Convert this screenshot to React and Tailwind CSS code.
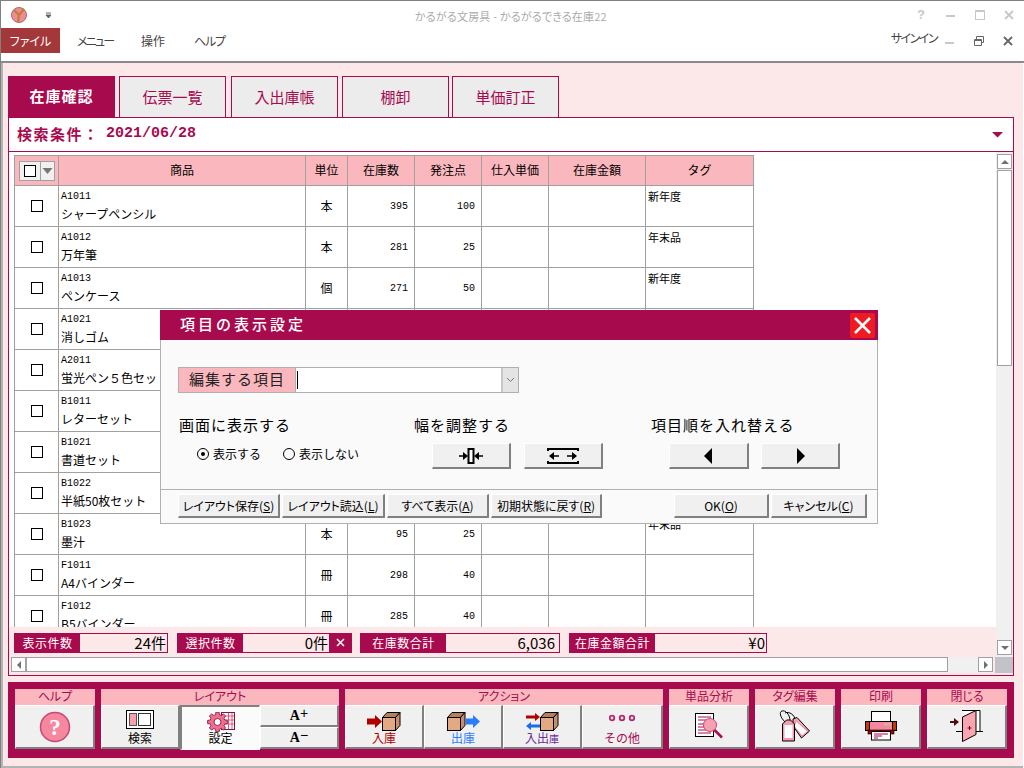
import React from "react";

const rows = [
  ["A1011", "シャープペンシル", "本", "395", "100", "新年度"],
  ["A1012", "万年筆", "本", "281", "25", "年末品"],
  ["A1013", "ペンケース", "個", "271", "50", "新年度"],
  ["A1021", "消しゴム", "個", "310", "50", "新年度"],
  ["A2011", "蛍光ペン５色セット", "個", "248", "30", ""],
  ["B1011", "レターセット", "組", "180", "20", ""],
  ["B1021", "書道セット", "組", "120", "20", ""],
  ["B1022", "半紙50枚セット", "組", "210", "25", ""],
  ["B1023", "墨汁", "本", "95", "25", "年末品"],
  ["F1011", "A4バインダー", "冊", "298", "40", ""],
  ["F1012", "B5バインダー", "冊", "285", "40", ""],
];

const raised = "bg-[#f0f0f0] border-t border-l border-t-white border-l-white border-r-2 border-b-2 border-r-[#808080] border-b-[#808080]";

function gearPath(cx, cy, ro, ri, n) {
  let d = "";
  const step = (Math.PI * 2) / n;
  for (let i = 0; i < n; i++) {
    const a = i * step - Math.PI / 2;
    const pts = [
      [ri, a - step * 0.34],
      [ro, a - step * 0.2],
      [ro, a + step * 0.2],
      [ri, a + step * 0.34],
    ];
    pts.forEach(([r, t], j) => {
      d += `${i === 0 && j === 0 ? "M" : "L"}${(cx + r * Math.cos(t)).toFixed(2)} ${(cy + r * Math.sin(t)).toFixed(2)}`;
    });
  }
  return d + "Z";
}

function Tab({ children, active }) {
  return active ? (
    <div className="w-[107px] h-[41px] bg-[#a80a4e] text-white text-[15px] font-bold tracking-[1px] flex items-center justify-center">{children}</div>
  ) : (
    <div className="w-[107px] h-[41px] bg-[#ececec] border border-b-0 border-[#a80a4e] text-[#a80a4e] text-[15px] flex items-center justify-center">{children}</div>
  );
}

function Box({ cls = "" }) {
  return <span className={`block w-[12px] h-[12px] border border-black bg-white ${cls}`} />;
}

function Cube() {
  return (
    <svg width="19" height="19" viewBox="0 0 19 19" className="block">
      <path d="M.5 5.5 5 .5h13l-4.5 5z" fill="#b5805f" stroke="#000" />
      <path d="M13.5 5.5 18 .5v13l-4.500 5z" fill="#c98f6c" stroke="#000" />
      <rect x=".5" y="5.500" width="13" height="13" fill="#e2a982" stroke="#000" />
    </svg>
  );
}

function Stat({ label, value, labelW, w, x, pr = 1 }) {
  return (
    <div className="flex h-[20px] border border-[#a80a4e]" style={{ width: w }}>
      <div className="bg-[#a80a4e] text-white text-[12px] flex items-center justify-center tracking-[.5px]" style={{ width: labelW }}>{label}</div>
      <div className="flex-1 flex items-center justify-end text-[15px] leading-none text-black" style={{ paddingRight: pr }}>{value}</div>
      {x}
    </div>
  );
}

function Group({ title, w, children }) {
  return (
    <div className="flex flex-col shrink-0" style={{ width: w }}>
      <div className="h-[16px] bg-[#fbb7be] text-[#a80a4e] text-[12px] leading-[14px] text-center [font-feature-settings:'palt']">{title}</div>
      <div className="flex h-[44px]">{children}</div>
    </div>
  );
}

function TB({ w, icon, label, color = "text-black", size = "text-[12px]", pt = 5 }) {
  return (
    <div className={`${raised} h-full flex flex-col items-center justify-start ${color} ${size}`} style={{ width: w }}>
      <div className="h-[25px] flex items-start justify-center" style={{ paddingTop: pt }}>{icon}</div>
      {label && <div className="leading-[13px]">{label}</div>}
    </div>
  );
}

function ScrollBtn({ dir, cls = "" }) {
  const p = { up: "M2 8 6 4l4 4z", down: "M2 4h8L6 8z", left: "M8 2v8L4 6z", right: "M4 2v8l4-4z" }[dir];
  return (
    <div className={`w-[15px] h-[15px] bg-white border border-[#a0a0a0] flex items-center justify-center shrink-0 ${cls}`}>
      <svg width="12" height="12" viewBox="0 0 12 12"><path d={p} fill="#707070" /></svg>
    </div>
  );
}

function FootBtn({ w, children, u }) {
  return (
    <div className={`${raised} h-[24px] flex items-center justify-center text-[12px] text-black whitespace-nowrap [font-feature-settings:'palt']`} style={{ width: w }}>
      <span>{children}(<span className="underline">{u}</span>)</span>
    </div>
  );
}

export default function App() {
  return (
    <div className="w-[1024px] h-[768px] overflow-hidden relative bg-white flex flex-col border-t border-l border-[#808080] font-['Noto_Sans_CJK_JP','Liberation_Sans',sans-serif]">
      {/* title bar */}
      <div className="h-[27px] flex items-center relative shrink-0">
        <svg width="18" height="18" viewBox="0 0 18 18" className="ml-[9px]">
          <circle cx="9" cy="9" r="7.500" fill="#f08a98" stroke="#a86a6a" />
          <path d="M4 4l5 5 5-6M9 9l-1 7" stroke="#c08030" strokeWidth="2.200" fill="none" />
        </svg>
        <svg width="8" height="8" viewBox="0 0 8 8" className="ml-[17px]">
          <path d="M1 2h5M1 4l2.500 3L6 4z" stroke="#666" fill="#666" />
        </svg>
        <div className="absolute left-[414px] top-[6px] text-[11px] leading-[18px] tracking-[.2px] text-[#ababab] whitespace-nowrap [font-feature-settings:'palt']">かるがる文房具 - かるがるできる在庫22</div>
        <div className="ml-auto flex items-center pr-[10px] text-[#c8c8c8]">
          <span className="w-[30px] text-center text-[13px] font-bold font-['Liberation_Sans']">?</span>
          <span className="w-[9px] h-[2px] bg-[#c8c8c8] ml-[10px] mt-[3px]" />
          <span className="w-[10px] h-[10px] border border-[#c8c8c8] border-t-2 ml-[20px]" />
          <svg width="10" height="10" viewBox="0 0 10 10" className="ml-[19px]"><path d="M1 1l8 8M9 1 1 9" stroke="#c8c8c8" strokeWidth="1.800" /></svg>
        </div>
      </div>
      {/* menu */}
      <div className="h-[35px] shrink-0 flex items-start text-[12px] text-[#444] relative border-b-2 border-[#8a8a8a] [font-feature-settings:'palt']">
        <div className="w-[59px] h-[25px] bg-[#a4373a] text-white flex items-center justify-center">ファイル</div>
        <span className="ml-[17px] w-[35px] leading-[25px] tracking-[-1.800px] whitespace-nowrap">メニュー</span>
        <span className="ml-[29px] leading-[25px]">操作</span>
        <span className="ml-[29px] leading-[25px] tracking-[-1.200px]">ヘルプ</span>
        <span className="ml-auto leading-[20px] mr-[87px] text-[#444] tracking-[-1.500px] whitespace-nowrap">サインイン</span>
        <div className="absolute left-[944px] top-[8px] flex items-center">
          <span className="w-[9px] h-[2px] bg-[#c8c8c8] mt-[3px]" />
          <svg width="10" height="10" viewBox="0 0 10 10" className="ml-[20px]"><path d="M.5 3.500h7v6h-7zM2.500 3V.5h7v6H8M.5 4.500h7" stroke="#666" fill="none" /></svg>
          <svg width="10" height="10" viewBox="0 0 10 10" className="ml-[19px]"><path d="M1 1l8 8M9 1 1 9" stroke="#666" strokeWidth="1.800" /></svg>
        </div>
      </div>
      {/* main */}
      <div className="flex-1 min-h-0 bg-[#fde8e9] border-l-2 border-b-2 border-[#b4b4b4] mr-[1px] pl-[5px] pt-[13px] flex flex-col">
        <div className="flex h-[41px] shrink-0">
          <Tab active>在庫確認</Tab>
          <div className="w-[4px]" />
          <Tab>伝票一覧</Tab>
          <div className="w-[5px]" />
          <Tab>入出庫帳</Tab>
          <div className="w-[4px]" />
          <Tab>棚卸</Tab>
          <div className="w-[3px]" />
          <div className="w-[108px]"><Tab>単価訂正</Tab></div>
        </div>
        {/* panel */}
        <div className="w-[1006px] h-[559px] shrink-0 border border-[#a80a4e] flex flex-col">
          <div className="h-[34px] shrink-0 bg-white border-b border-[#a80a4e] flex items-center pl-[8px] pr-[10px] text-[#a80a4e]">
            <span className="text-[15px] font-bold tracking-[1.500px] whitespace-nowrap w-[89px]">検索条件：</span>
            <span className="font-['Liberation_Mono'] font-bold text-[15px]">2021/06/28</span>
            <svg width="11" height="7" viewBox="0 0 11 7" className="ml-auto"><path d="M0 1h11L5.500 6.500z" fill="#a80a4e" /></svg>
          </div>
          <div className="flex h-[505px] shrink-0">
            <div className="w-[987px] flex flex-col">
              <div className="h-[475px] bg-white overflow-hidden pl-[5px] pt-[3px]">
                <table className="table-fixed border-collapse text-black" style={{ width: 739 }}>
                  <colgroup>
                    <col className="w-[44px]" /><col className="w-[247px]" /><col className="w-[42px]" /><col className="w-[67px]" /><col className="w-[67px]" /><col className="w-[67px]" /><col className="w-[97px]" /><col className="w-[108px]" />
                  </colgroup>
                  <thead>
                    <tr className="h-[30px] bg-[#fbb7be] text-[12px]">
                      <th className="border border-[#a0a0a0] font-normal p-0">
                        <div className="mx-auto w-[36px] h-[20px] bg-[#f0f0f0] border border-[#a0a0a0] flex items-center">
                          <span className="w-[21px] flex justify-center border-r border-[#a0a0a0] h-full items-center"><Box /></span>
                          <svg width="13" height="8" viewBox="0 0 13 8"><path d="M1.500 1h10l-5 6z" fill="#777" /></svg>
                        </div>
                      </th>
                      {["商品", "単位", "在庫数", "発注点", "仕入単価", "在庫金額", "タグ"].map((h) => (
                        <th key={h} className="border border-[#a0a0a0] font-normal p-0 pb-[2px] text-center">{h}</th>
                      ))}
                    </tr>
                  </thead>
                  <tbody>
                    {rows.map((r) => (
                      <tr key={r[0]} className="h-[41px]">
                        <td className="border border-[#a0a0a0] p-0"><Box cls="mx-auto" /></td>
                        <td className="border border-[#a0a0a0] p-0 pl-[2px] align-top">
                          <div className="font-['Liberation_Mono'] text-[10px] leading-[12px] mt-[5px]">{r[0]}</div>
                          <div className="text-[12px] leading-[18px] mt-[2px] whitespace-nowrap">{r[1]}</div>
                        </td>
                        <td className="border border-[#a0a0a0] p-0 text-center text-[12px]">{r[2]}</td>
                        <td className="border border-[#a0a0a0] p-0 pr-[6px] text-right font-['Liberation_Mono'] text-[10px]">{r[3]}</td>
                        <td className="border border-[#a0a0a0] p-0 pr-[6px] text-right font-['Liberation_Mono'] text-[10px]">{r[4]}</td>
                        <td className="border border-[#a0a0a0] p-0" />
                        <td className="border border-[#a0a0a0] p-0" />
                        <td className="border border-[#a0a0a0] p-0 pl-[2px] align-top text-[11px] leading-[20px]">{r[5]}</td>
                      </tr>
                    ))}
                  </tbody>
                </table>
              </div>
              <div className="h-[30px] flex items-center pl-[5px] pt-[1px]">
                <Stat label="表示件数" value="24件" w={154} labelW={65} />
                <div className="w-[9px]" />
                <Stat label="選択件数" value="0件" w={175} labelW={65} x={<div className="w-[22px] bg-[#a80a4e] text-white flex items-center justify-center"><svg width="9" height="9" viewBox="0 0 9 9"><path d="M1 1l7 7M8 1 1 8" stroke="#fff" strokeWidth="1.500" /></svg></div>} />
                <div className="w-[8px]" />
                <Stat label="在庫数合計" value="6,036" w={200} labelW={85} pr={4} />
                <div className="w-[9px]" />
                <Stat label="在庫金額合計" value="¥0" w={198} labelW={85} />
              </div>
            </div>
            <div className="flex-1 bg-[#f0f0f0] pl-[1px] pt-[2px] flex flex-col">
              <ScrollBtn dir="up" />
              <div className="w-[15px] h-[196px] bg-white border border-[#a0a0a0] mt-[1px]" />
              <ScrollBtn dir="down" cls="mt-auto mb-[2px]" />
            </div>
          </div>
          <div className="h-[16px] flex shrink-0 bg-[#fde8e9] pl-[2px]">
            <ScrollBtn dir="left" />
            <div className="w-[922px] h-[15px] bg-white border border-[#a0a0a0]" />
            <div className="w-[30px] h-[15px] bg-[#f0f0f0]" />
            <ScrollBtn dir="right" />
            <div className="flex-1 bg-[#c2c3c9] h-[16px] ml-[2px]" />
          </div>
        </div>
        {/* toolbar */}
        <div className="w-[1006px] h-[76px] shrink-0 mt-[6px] bg-[#a80a4e] pt-[7px] px-[7px] flex gap-[6px]">
          <Group title="ヘルプ" w={80}>
            <TB w={80} pt={5} icon={
              <svg width="32" height="32" viewBox="0 0 32 32">
                <circle cx="16" cy="16" r="14.500" fill="#f7879f" stroke="#c24a74" strokeWidth="1.500" />
                <text x="16" y="24" textAnchor="middle" fontSize="23" fontWeight="bold" fill="#fff" fontFamily="Liberation Serif">?</text>
              </svg>
            } />
          </Group>
          <Group title="レイアウト" w={238}>
            <TB w={79} label="検索" pt={4} icon={
              <svg width="28" height="19" viewBox="0 0 28 19"><rect x=".5" y=".5" width="27" height="18" fill="#fff" stroke="#000" /><rect x="3.500" y="3.500" width="7" height="12" fill="#f9a0ac" stroke="#555" /><rect x="12.500" y="3.500" width="12" height="12" fill="#fff" stroke="#333" /></svg>
            } />
            <div className="w-[80px] h-[45px] shrink-0 bg-[#fbfbfb] border-t-2 border-l-2 border-t-[#808080] border-l-[#808080] border-b border-r border-white flex flex-col items-center text-[12px] text-black z-10">
              <svg width="28" height="20" viewBox="0 0 28 20" className="mt-[5px]">
                <rect x="14.500" y=".5" width="13" height="17" fill="#fff" stroke="#7a1a40" />
                <path d="M18 4h9M18 8h9M18 12h9M21.500 1v16M25 1v16" stroke="#e0507a" />
                <path d={gearPath(10.5, 10, 10, 7.5, 8)} fill="#f26d8e" stroke="#8a2d4f" />
                <circle cx="10.500" cy="10" r="3.500" fill="#fff" stroke="#8a2d4f" />
              </svg>
              <span className="leading-[13px] -mt-[1px]">設定</span>
            </div>
            <div className="w-[79px] flex flex-col font-['Liberation_Serif'] font-bold text-[14px] text-black">
              <div className={`${raised} h-[23px] flex items-center justify-center leading-none`}>A<span className="text-[14px] font-normal font-['Liberation_Sans'] -mt-[6px]">+</span></div>
              <div className={`${raised} h-[22px] flex items-center justify-center leading-none`}>A<span className="text-[14px] font-normal font-['Liberation_Sans'] -mt-[6px]">−</span></div>
            </div>
          </Group>
          <Group title="アクション" w={318}>
            <TB w={79} color="text-[#b00000]" label="入庫" pt={6} icon={
              <div className="flex items-center">
                <svg width="15" height="13" viewBox="0 0 15 13"><path d="M0 3.500h8V0l7 6.500L8 13V9.500H0z" fill="#b00000" /></svg>
                <Cube />
              </div>
            } />
            <TB w={79} color="text-[#2a7cff]" label="出庫" pt={6} icon={
              <div className="flex items-center">
                <Cube />
                <svg width="14" height="13" viewBox="0 0 14 13"><path d="M0 3.500h7V0l7 6.500L7 13V9.500H0z" fill="#2a7cff" /></svg>
              </div>
            } />
            <TB w={79} color="text-[#6a2ca0]" label={<>入出<span className="text-[10px]">庫</span></>} pt={6} icon={
              <div className="flex items-center">
                <svg width="14" height="17" viewBox="0 0 14 17"><path d="M0 2.500h9V0l5 4-5 4V5.500H0z" fill="#b00000" /><path d="M14 11.500H5V9l-5 4 5 4v-2.500h9z" fill="#1a6cf0" /></svg>
                <Cube />
              </div>
            } />
            <TB w={81} color="text-[#a80a4e]" label="その他" pt={3} icon={
              <svg width="26" height="19" viewBox="0 0 26 19"><g fill="none" stroke="#b8246a" strokeWidth="1.800"><circle cx="3" cy="9" r="2.300" /><circle cx="13" cy="9" r="2.300" /><circle cx="23" cy="9" r="2.300" /></g></svg>
            } />
          </Group>
          <Group title="単品分析" w={80}>
            <TB w={80} pt={7} icon={
              <svg width="32" height="26" viewBox="0 0 32 26">
                <rect x="2.500" y=".5" width="18" height="23" fill="#fff" stroke="#000" />
                <path d="M5 4h13M5 7h13M5 11h8M5 14h8M5 17h13M5 20h13" stroke="#a80a4e" />
                <circle cx="17" cy="12" r="6.500" fill="#f7a0b2" stroke="#c24a74" />
                <path d="M21.500 17l7.500 7.500" stroke="#a80a4e" strokeWidth="2.500" />
              </svg>
            } />
          </Group>
          <Group title="タグ編集" w={80}>
            <TB w={80} pt={4} icon={
              <svg width="32" height="32" viewBox="0 0 32 32">
                <path d="M6 12C1 7 0 2 3 1c3-1 8 3 8 10M6 3c4-2 10 2 10 7" stroke="#000" fill="none" />
                <path d="M14 9l4-1.500 12.500 13.500-8 7L14 16z" fill="#f9a6b4" stroke="#000" />
                <path d="M17.500 11l11 10.500-5.500 4.500-8-10z" fill="#fff" stroke="#e06080" strokeWidth=".7" />
                <path d="M3.500 14l4-4h4l4 4v17h-12z" fill="#f79bb0" stroke="#000" />
                <rect x="5.500" y="15" width="8" height="13" fill="#fff" />
              </svg>
            } />
          </Group>
          <Group title="印刷" w={80}>
            <TB w={80} pt={5} icon={
              <svg width="32" height="30" viewBox="0 0 32 30">
                <rect x="6.500" y=".5" width="19" height="10" fill="#fff" stroke="#000" />
                <rect x=".5" y="10.500" width="31" height="9" fill="#c43a00" stroke="#000" />
                <rect x="4.500" y="10.500" width="23" height="9" fill="#f7879f" stroke="#000" />
                <rect x="19" y="12" width="7" height="2.500" fill="#c8b8a0" />
                <rect x="3" y="19" width="26" height="4" fill="#a00000" stroke="#000" strokeWidth=".6" />
                <rect x="6.500" y="20.500" width="19" height="8.500" fill="#fff" stroke="#000" />
                <path d="M9 23h14M9 25h8M9 27h4" stroke="#a80a4e" />
              </svg>
            } />
          </Group>
          <Group title="閉じる" w={80}>
            <TB w={80} pt={4} icon={
              <svg width="34" height="32" viewBox="0 0 34 32">
                <path d="M0 11h4V8l5 4-5 4v-3H0z" fill="#520a10" />
                <path d="M6 21.500h27" stroke="#000" />
                <path d="M12 .5h18v21h-4" fill="#fff" stroke="#000" />
                <path d="M12.500 7 26 .5v24L12.500 31.500z" fill="#f9a6b0" stroke="#000" />
                <path d="M17.500 18h4M19.500 16v4" stroke="#7a0030" />
              </svg>
            } />
          </Group>
        </div>
      </div>

      {/* dialog */}
      <div className="absolute left-[159px] top-[309px] w-[718px] h-[214px] bg-[#fafafa] border border-t-0 border-[#b0b0b0] flex flex-col text-black z-20">
        <div className="h-[30px] shrink-0 -mx-[1px] bg-[#a80a4e] flex items-center pl-[20px] pr-[3px] text-white">
          <span className="text-[15px] tracking-[3px] font-medium pb-[2px]">項目の表示設定</span>
          <div className="ml-auto w-[25px] h-[25px] bg-[#ed1c24] rounded-[2px] flex items-center justify-center">
            <svg width="19" height="19" viewBox="0 0 19 19"><path d="M2 2l15 15M17 2 2 17" stroke="#fff" strokeWidth="2.600" /></svg>
          </div>
        </div>
        <div className="flex mt-[27px] ml-[17px] h-[26px] w-[341px] border border-[#b0b0b0] bg-white">
          <div className="w-[117px] bg-[#fbb7be] border-r border-[#b0b0b0] text-[15px] tracking-[1px] flex items-center justify-center text-[#222] pb-[1px]">編集する項目</div>
          <div className="w-[1px] h-[18px] bg-black ml-[1px] mt-[3px]" />
          <div className="ml-auto w-[17px] bg-[#e4e4e4] border-l-2 border-[#c8c8c8] flex items-center justify-center">
            <svg width="9" height="6" viewBox="0 0 9 6"><path d="M1 1l3.500 3.500L8 1" stroke="#777" fill="none" /></svg>
          </div>
        </div>
        <div className="flex mt-[22px] h-[62px]">
          <div className="w-[253px] pl-[18px]">
            <div className="text-[15px] leading-[20px] tracking-[1px] whitespace-nowrap">画面に表示する</div>
            <div className="flex items-center mt-[10px] pl-[18px] text-[12px] leading-[18px]">
              <span className="w-[12px] h-[12px] rounded-full border border-black flex items-center justify-center mr-[4px]"><span className="w-[4px] h-[4px] rounded-full bg-black" /></span>
              表示する
              <span className="w-[12px] h-[12px] rounded-full border border-black ml-[22px] mr-[4px]" />
              表示しない
            </div>
          </div>
          <div className="w-[237px]">
            <div className="text-[15px] leading-[20px] tracking-[1px] whitespace-nowrap">幅を調整する</div>
            <div className="flex mt-[8px] ml-[18px] gap-[13px]">
              <div className={`${raised} w-[79px] h-[26px] flex items-center justify-center`}>
                <svg width="32" height="16" viewBox="0 0 32 16"><path d="M4 8h7M28 8h-7" stroke="#000" strokeWidth="1.500" /><path d="M8 4l5 4-5 4zM24 4l-5 4 5 4z" /><rect x="13.500" y="1" width="5" height="14" fill="#fff" stroke="#000" strokeWidth="2" /></svg>
              </div>
              <div className={`${raised} w-[79px] h-[26px] flex items-center justify-center`}>
                <svg width="32" height="16" viewBox="0 0 32 16"><path d="M1 1h30M1 15h30M1 0v3M31 0v3M1 13v3M31 13v3" stroke="#000" strokeWidth="2" /><path d="M3 8h9M20 8h9" stroke="#000" strokeWidth="1.500" /><path d="M7 4 2 8l5 4zM25 4l5 4-5 4z" /></svg>
              </div>
            </div>
          </div>
          <div className="flex-1">
            <div className="text-[15px] leading-[20px] tracking-[1px] whitespace-nowrap">項目順を入れ替える</div>
            <div className="flex mt-[8px] ml-[18px] gap-[12px]">
              <div className={`${raised} w-[80px] h-[26px] flex items-center justify-center`}>
                <svg width="9" height="16" viewBox="0 0 9 16"><path d="M8 0v16L0 8z" /></svg>
              </div>
              <div className={`${raised} w-[79px] h-[26px] flex items-center justify-center`}>
                <svg width="9" height="16" viewBox="0 0 9 16"><path d="M1 0v16l8-8z" /></svg>
              </div>
            </div>
          </div>
        </div>
        <div className="mt-auto h-[34px] border-t border-[#b0b0b0] flex items-start pt-[4px] pl-[17px]">
          <FootBtn w={102} u="S">レイアウト保存</FootBtn>
          <div className="w-[2px]" />
          <FootBtn w={103} u="L">レイアウト読込</FootBtn>
          <div className="w-[2px]" />
          <FootBtn w={102} u="A">すべて表示</FootBtn>
          <div className="w-[2px]" />
          <FootBtn w={111} u="R">初期状態に戻す</FootBtn>
          <div className="w-[72px]" />
          <FootBtn w={95} u="O">OK</FootBtn>
          <div className="w-[2px]" />
          <FootBtn w={96} u="C">キャンセル</FootBtn>
        </div>
      </div>
    </div>
  );
}
